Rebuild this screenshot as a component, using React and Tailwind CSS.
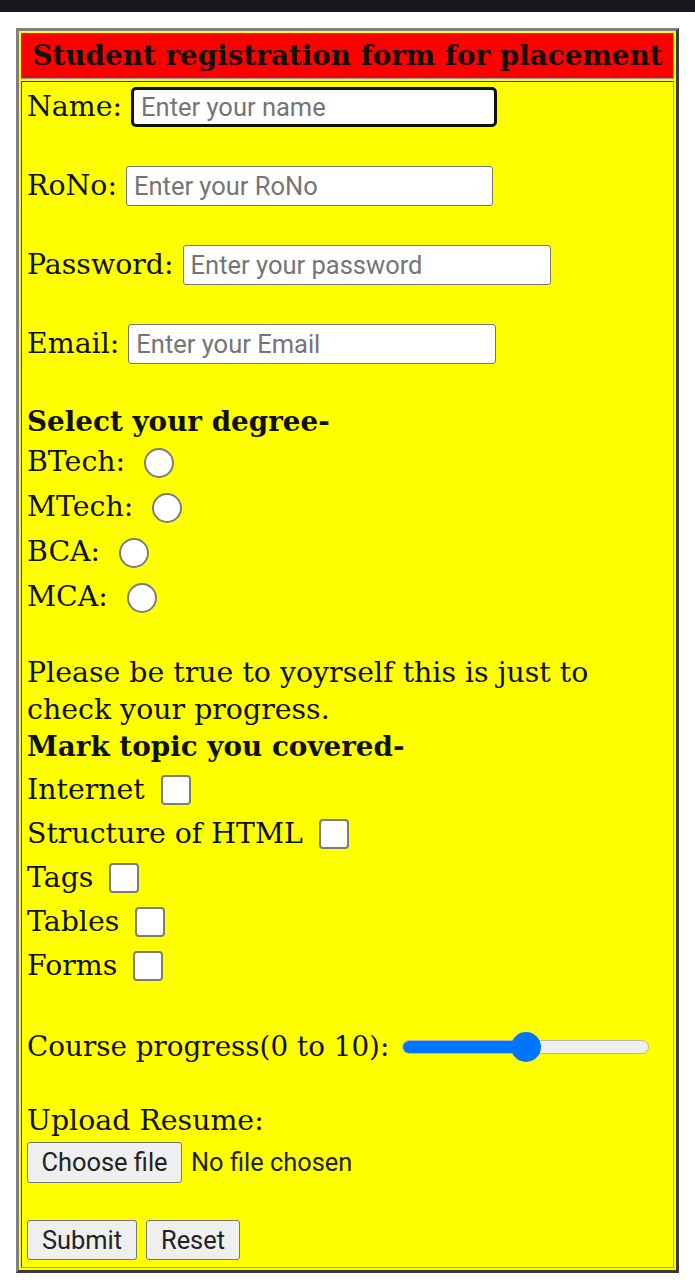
import { useState } from "react";

const serif = "font-['DejaVu_Serif','Liberation_Serif',serif]";
const sans = "font-['Roboto','Liberation_Sans',sans-serif]";

function TextField({ label, placeholder, type = "text", width, focused }) {
  return (
    <div className="flex h-[48px] items-center">
      <span>{label}</span>
      <input
        type={type}
        placeholder={placeholder}
        className={`ml-[9px] h-[40px] ${width} bg-white px-[7px] text-[25.5px] text-[#222] outline-none placeholder:text-[#757575] ${sans} ${
          focused
            ? "rounded-[5px] border-[3px] border-[#111]"
            : "rounded-[3px] border border-[#767676]"
        }`}
      />
    </div>
  );
}

function Radio({ label }) {
  return (
    <label className="flex h-[45px] items-center">
      <span>{label}</span>
      <input
        type="radio"
        name="degree"
        className="ml-[19px] h-[30px] w-[30px] appearance-none rounded-full border-2 border-[#7d7d7d] bg-white"
      />
    </label>
  );
}

function Check({ label }) {
  return (
    <label className="flex h-[44px] items-center">
      <span>{label}</span>
      <input
        type="checkbox"
        className="ml-[16px] h-[30px] w-[30px] appearance-none rounded-[4px] border-2 border-[#7d7d7d] bg-white"
      />
    </label>
  );
}

export default function App() {
  const [progress] = useState(5);

  return (
    <div className="min-h-[1280px] bg-white">
      <div className="h-[12px] bg-[#16171b]" />

      <div className="ml-[16px] mt-[16px] w-[663px] border-[3px] border-t-[#808080] border-l-[#808080] border-r-[#3a3a3a] border-b-[#3a3a3a] bg-[#ffff00] p-[2px]">
        <div className="flex h-[46px] items-center justify-center border border-t-[#555] border-l-[#555] border-r-[#9a9a9a] border-b-[#9a9a9a] bg-[#ff0000]">
          <h1 className={`${serif} text-[27.8px] font-bold text-[#111]`}>
            Student registration form for placement
          </h1>
        </div>

        <form
          className={`mt-[2px] h-[1187px] border border-t-[#333] border-l-[#333] border-r-[#9a9a9a] border-b-[#9a9a9a] pl-[5px] pt-[1px] ${serif} text-[28.4px] text-[#111]`}
        >
          <TextField label="Name:" placeholder="Enter your name" width="w-[366px]" focused />
          <div className="mt-[31px]">
            <TextField label="RoNo:" placeholder="Enter your RoNo" width="w-[367px]" />
          </div>
          <div className="mt-[31px]">
            <TextField label="Password:" placeholder="Enter your password" type="password" width="w-[368px]" />
          </div>
          <div className="mt-[31px]">
            <TextField label="Email:" placeholder="Enter your Email" type="email" width="w-[368px]" />
          </div>

          <p className="mt-[35px] h-[37px] text-[27.8px] font-bold leading-[37px]">Select your degree-</p>
          <Radio label="BTech:" />
          <Radio label="MTech:" />
          <Radio label="BCA:" />
          <Radio label="MCA:" />

          <p className="mt-[34px] leading-[37px]">
            Please be true to yoyrself this is just to
            <br />
            check your progress.
          </p>
          <p className="h-[37px] text-[27.8px] font-bold leading-[37px]">Mark topic you covered-</p>
          <div className="mt-[3px]">
            <Check label="Internet" />
            <Check label="Structure of HTML" />
            <Check label="Tags" />
            <Check label="Tables" />
            <Check label="Forms" />
          </div>

          <div className="mt-[38px] flex h-[42px] items-center">
            <span className="text-[27.8px]">Course progress(0 to 10):</span>
            <div className="relative ml-[13px] h-[14px] w-[247px] rounded-full border border-[#b5b5b5] bg-[#efefef]">
              <div
                className="h-full rounded-full bg-[#0075ff]"
                style={{ width: `${(progress / 10) * 100}%` }}
              />
              <div
                className="absolute top-1/2 h-[30px] w-[30px] -translate-x-1/2 -translate-y-1/2 rounded-full bg-[#0075ff]"
                style={{ left: `${(progress / 10) * 100}%` }}
              />
            </div>
          </div>

          <p className="mt-[34px] h-[38px] leading-[38px]">Upload Resume:</p>
          <div className={`flex h-[44px] items-center ${sans} text-[25.4px] text-[#222]`}>
            <button
              type="button"
              className="h-[41px] w-[155px] rounded-[3px] border border-[#767676] bg-[#efefef]"
            >
              Choose file
            </button>
            <span className="ml-[9px]">No file chosen</span>
          </div>

          <div className={`mt-[34px] flex h-[44px] items-center gap-[9px] ${sans} text-[25.4px] text-[#222]`}>
            <button
              type="submit"
              className="h-[40px] w-[110px] rounded-[3px] border border-[#767676] bg-[#efefef]"
            >
              Submit
            </button>
            <button
              type="reset"
              className="h-[40px] w-[94px] rounded-[3px] border border-[#767676] bg-[#efefef]"
            >
              Reset
            </button>
          </div>
        </form>
      </div>
    </div>
  );
}
